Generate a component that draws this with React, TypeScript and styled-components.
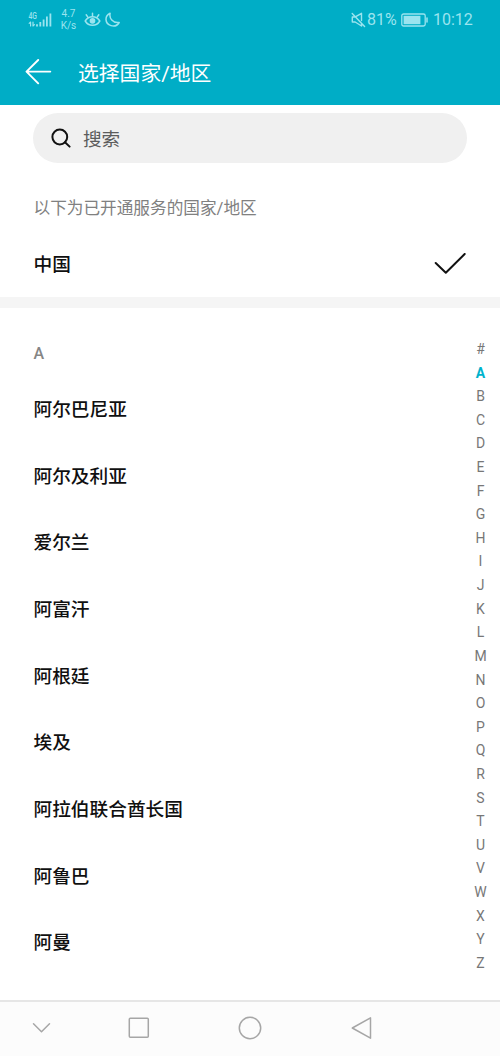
import React from "react";
import styled, { createGlobalStyle } from "styled-components";

const GlobalStyle = createGlobalStyle`
  * { box-sizing: border-box; }
  html, body { margin: 0; padding: 0; background: #fff; }
  body { font-family: Roboto, "Noto Sans CJK SC", sans-serif; color: #111; }
`;

const Screen = styled.div`
  width: 500px;
  height: 1056px;
  display: flex;
  flex-direction: column;
  overflow: hidden;
  background: #fff;
`;

const Header = styled.header`
  height: 105px;
  flex: none;
  background: #00adc6;
  color: #fff;
`;

const StatusBar = styled.div`
  height: 39px;
  display: flex;
  align-items: center;
  justify-content: space-between;
  padding: 0 26px 0 28px;
  color: #9be4ef;
`;

const StatusGroup = styled.div`
  display: flex;
  align-items: center;
`;

const NetSpeed = styled.div`
  width: 17px;
  margin: 1px 7px 0 8px;
  font-size: 10px;
  line-height: 12.5px;
  text-align: center;
  white-space: nowrap;
`;

const StatusText = styled.span<{ $size: number; $width: number }>`
  width: ${(p) => p.$width}px;
  font-size: ${(p) => p.$size}px;
  line-height: 20px;
  white-space: nowrap;
`;

const Icon = styled.svg<{ $gap?: number }>`
  display: block;
  flex: none;
  margin-right: ${(p) => p.$gap ?? 0}px;
  fill: none;
  stroke: currentColor;
  stroke-linecap: round;
  stroke-linejoin: round;
`;

const TitleBar = styled.div`
  height: 66px;
  display: flex;
  align-items: center;
  padding-left: 25px;
`;

const Title = styled.h1`
  margin: 0;
  padding-top: 3px;
  font-size: 20.8px;
  line-height: 30px;
  font-weight: 400;
`;

const SearchBox = styled.div`
  flex: none;
  height: 50px;
  margin: 8px 33px 0;
  padding-left: 18px;
  display: flex;
  align-items: center;
  border-radius: 25px;
  background: #f0f0f0;
`;

const SearchHint = styled.span`
  padding-top: 3px;
  font-size: 18.6px;
  line-height: 28px;
  color: #5c5c5c;
`;

const Notice = styled.p`
  flex: none;
  margin: 34px 0 0 33.5px;
  font-size: 16.65px;
  line-height: 24px;
  color: #808080;
`;

const SelectedRow = styled.div`
  flex: none;
  height: 66px;
  margin-top: 10px;
  padding: 0 34px 0 33.5px;
  display: flex;
  align-items: center;
  justify-content: space-between;
`;

const CountryName = styled.span`
  padding-top: 2px;
  font-size: 18.7px;
  line-height: 28px;
  font-weight: 500;
  color: #101010;
  white-space: nowrap;
`;

const Divider = styled.div`
  flex: none;
  height: 11px;
  background: #f5f5f5;
`;

const ListArea = styled.main`
  flex: 1;
  min-height: 0;
  display: flex;
  justify-content: space-between;
`;

const CountryList = styled.div`
  padding: 34px 0 0 33.5px;
`;

const SectionLetter = styled.div`
  height: 33.6px;
  font-size: 16px;
  line-height: 24px;
  font-weight: 500;
  color: #858585;
`;

const CountryRow = styled.div`
  height: 66.7px;
  display: flex;
  align-items: center;
`;

const IndexBar = styled.nav`
  width: 39px;
  padding-top: 30px;
  display: flex;
  flex-direction: column;
`;

const IndexLetter = styled.span<{ $active: boolean }>`
  height: 23.62px;
  line-height: 23.62px;
  font-size: 14px;
  text-align: center;
  font-weight: ${(p) => (p.$active ? 700 : 400)};
  color: ${(p) => (p.$active ? "#00b2cc" : "#777")};
`;

const NavBar = styled.footer`
  flex: none;
  height: 56px;
  display: flex;
  align-items: center;
  padding: 0 0 2px 32px;
  border-top: 2px solid #e6e6e6;
  background: #fcfcfc;
  color: #a6a6a6;
`;

const countries = [
  "阿尔巴尼亚",
  "阿尔及利亚",
  "爱尔兰",
  "阿富汗",
  "阿根廷",
  "埃及",
  "阿拉伯联合酋长国",
  "阿鲁巴",
  "阿曼",
];

const letters = "#ABCDEFGHIJKLMNOPQRSTUVWXYZ".split("");

export default function App() {
  return (
    <>
      <GlobalStyle />
      <Screen>
        <Header>
          <StatusBar>
            <StatusGroup>
              <Icon width="24" height="18" viewBox="0 0 24 18">
                <text x="0.5" y="8.2" fontSize="8.5" fontWeight="500" textLength="8.5" lengthAdjust="spacingAndGlyphs" fill="currentColor" stroke="none">4G</text>
                <path d="M2.6 15V11L1.2 12.4M5 11v4l1.4-1.4" strokeWidth="1.2" />
                <path d="M9 13.2V15.5M12.3 11V15.5M15.6 8.4V15.5M18.9 5.5V15.5M22.4 2.5V15.5" strokeWidth="1.8" strokeLinecap="butt" />
              </Icon>
              <NetSpeed>
                4.7
                <br />
                K/s
              </NetSpeed>
              <Icon $gap={4} width="17" height="16" viewBox="0 0 17 16" strokeWidth="1.5">
                <path d="M1.2 9C3 6 5.5 4.7 8.5 4.7S14 6 15.8 9C14 12 11.5 13.3 8.5 13.3S3 12 1.2 9Z" />
                <circle cx="8.5" cy="8.8" r="2.1" fill="currentColor" />
                <path d="M8.5 4.5V1.2M4 5.4L2.2 2.8M13 5.4L14.8 2.8" />
              </Icon>
              <Icon width="16" height="16" viewBox="0 0 16 16" strokeWidth="1.5">
                <path d="M5.1 1.3C4 6.2 7.6 11.4 14.2 10.5C12.5 13.3 9.2 14.6 6 13.6C-.5 11.5-.5 3.8 5.1 1.3Z" />
              </Icon>
            </StatusGroup>
            <StatusGroup>
              <Icon $gap={1} width="15" height="16" viewBox="0 0 15 16" strokeWidth="1.4">
                <path d="M1.2 1.4L13.6 14.6M3.5 5H1.3V10H4.2L10.5 14V11.5M5.2 4.3L10.5 1.3V8.5" />
              </Icon>
              <StatusText $size={16} $width={34}>81%</StatusText>
              <Icon $gap={5} width="27" height="14" viewBox="0 0 27 14">
                <rect x="0.8" y="1" width="23.4" height="12" rx="1.8" strokeWidth="1.3" />
                <rect x="2.6" y="2.8" width="16.8" height="8.4" fill="currentColor" stroke="none" />
                <path d="M26 5V9" strokeWidth="1.5" />
              </Icon>
              <StatusText $size={16} $width={41}>10:12</StatusText>
            </StatusGroup>
          </StatusBar>
          <TitleBar>
            <Icon $gap={26} width="27" height="26" viewBox="0 0 27 26" strokeWidth="1.9">
              <path d="M25.3 12.6H1.6M13.2 1L1.5 12.6L13.2 24.3" />
            </Icon>
            <Title>选择国家/地区</Title>
          </TitleBar>
        </Header>

        <SearchBox>
          <Icon $gap={12} width="20" height="20" viewBox="0 0 20 20" strokeWidth="2">
            <circle cx="8.8" cy="9" r="7.4" />
            <path d="M14 14.2L18.6 18.6" />
          </Icon>
          <SearchHint>搜索</SearchHint>
        </SearchBox>
        <Notice>以下为已开通服务的国家/地区</Notice>
        <SelectedRow>
          <CountryName>中国</CountryName>
          <Icon width="32" height="22" viewBox="0 0 32 22" strokeWidth="2">
            <path d="M1.7 10L11.8 19.8L30.7 1" />
          </Icon>
        </SelectedRow>
        <Divider />

        <ListArea>
          <CountryList>
            <SectionLetter>A</SectionLetter>
            {countries.map((name) => (
              <CountryRow key={name}>
                <CountryName>{name}</CountryName>
              </CountryRow>
            ))}
          </CountryList>
          <IndexBar>
            {letters.map((letter) => (
              <IndexLetter key={letter} $active={letter === "A"}>
                {letter}
              </IndexLetter>
            ))}
          </IndexBar>
        </ListArea>

        <NavBar>
          <Icon $gap={77} width="19" height="12" viewBox="0 0 19 12" strokeWidth="1.5">
            <path d="M1.5 1.7L9.5 9.7L17.5 1.7" />
          </Icon>
          <Icon $gap={88} width="22" height="22" viewBox="0 0 22 22" strokeWidth="1.5">
            <rect x="1.3" y="1.3" width="19" height="19" rx="1" />
          </Icon>
          <Icon $gap={89} width="24" height="24" viewBox="0 0 24 24" strokeWidth="1.5">
            <circle cx="12" cy="12" r="10.7" />
          </Icon>
          <Icon width="22" height="24" viewBox="0 0 22 24" strokeWidth="1.5">
            <path d="M19.5 1.8V22.2L1.3 12Z" />
          </Icon>
        </NavBar>
      </Screen>
    </>
  );
}
